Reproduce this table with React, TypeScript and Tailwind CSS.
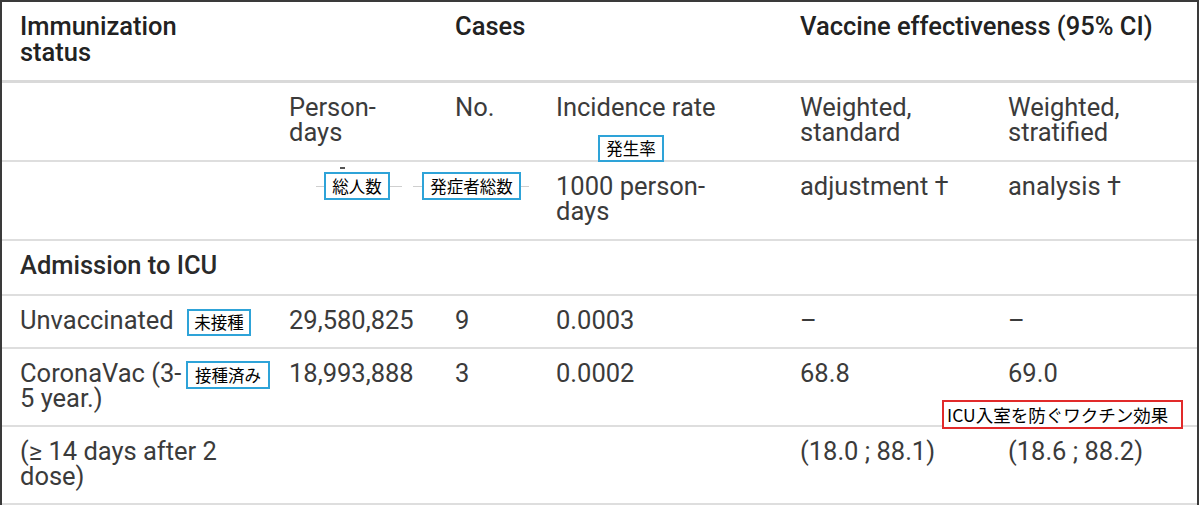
import React from 'react';

const grid = 'grid grid-cols-[269px_166px_101px_244px_208px_1fr]';
const cell = 'pl-[18px]';

type Row = { cells: React.ReactNode[] };

const rows: Row[] = [
  {
    cells: [
      <>Person-<br />days</>,
      'No.',
      'Incidence rate',
      <>Weighted,<br />standard</>,
      <>Weighted,<br />stratified</>,
    ],
  },
  {
    cells: ['', '', <>1000 person-<br />days</>, 'adjustment †', 'analysis †'],
  },
];

const dataRows = [
  { label: 'Unvaccinated', vals: ['29,580,825', '9', '0.0003', '–', '–'] },
  { label: <>CoronaVac (3-<br />5 year.)</>, vals: ['18,993,888', '3', '0.0002', '68.8', '69.0'] },
  { label: <>(≥ 14 days after 2<br />dose)</>, vals: ['', '', '', '(18.0 ; 88.1)', '(18.6 ; 88.2)'] },
];

const Note = ({ text, className, red }: { text: string; className: string; red?: boolean }) => (
  <div
    className={`absolute flex items-center bg-white text-black font-['Noto_Sans_CJK_JP',sans-serif] border-2 ${
      red ? 'border-[#e12a2a] px-[3px] text-[17.5px]' : 'border-[#2ea3d8] justify-center text-[16.5px]'
    } ${className}`}
  >
    {text}
  </div>
);

export default function App() {
  return (
    <div className="w-[1200px] h-[506px] overflow-hidden bg-white font-['Roboto','Liberation_Sans',sans-serif] text-[25.5px] leading-[25px] text-[#3b3b3b]">
      <div className="relative w-[1199px] border-t-2 border-x-2 border-[#3a3a3a]">
        {/* header */}
        <div className={`${grid} border-b-[3px] border-[#d9d9d9] pt-[11px] pb-[15px] font-medium text-[#222] leading-[26px]`}>
          <div className={`${cell} col-span-2`}>Immunization<br />status</div>
          <div className={`${cell} col-span-2`}>Cases</div>
          <div className={`${cell} col-span-2`}>Vaccine effectiveness (95% CI)</div>
        </div>

        {rows.map((r, i) => (
          <div key={i} className={`${grid} border-b-2 border-[#dedede] pt-3 h-[79px]`}>
            <div className={cell}></div>
            {r.cells.map((c, j) => (
              <div key={j} className={cell}>{c}</div>
            ))}
          </div>
        ))}

        <div className={`${grid} border-b-2 border-[#dedede] pt-3 pb-4 font-medium text-[#2a2a2a]`}>
          <div className={`${cell} col-span-6`}>Admission to ICU</div>
        </div>

        {dataRows.map((r, i) => (
          <div key={i} className={`${grid} border-b-2 border-[#dedede] pt-3 pb-[14px]`}>
            <div className={cell}>{r.label}</div>
            {r.vals.map((v, j) => (
              <div key={j} className={cell}>{v}</div>
            ))}
          </div>
        ))}

        {/* annotations laid over the table */}
        <div className="absolute left-[314px] top-[184px] w-[86px] h-px bg-[#cfcfcf]" />
        <div className="absolute left-[411px] top-[184px] w-[116px] h-px bg-[#cfcfcf]" />
        <div className="absolute left-[338px] top-[165px] w-[5px] h-[2px] bg-[#555]" />
        <Note text="発生率" className="left-[596px] top-[133px] w-[66px] h-[27px]" />
        <Note text="総人数" className="left-[322px] top-[170px] w-[66px] h-[28px]" />
        <Note text="発症者総数" className="left-[420px] top-[170px] w-[99px] h-[28px]" />
        <Note text="未接種" className="left-[185px] top-[307px] w-[64px] h-[27px]" />
        <Note text="接種済み" className="left-[184px] top-[359px] w-[84px] h-[28px]" />
        <Note text="ICU入室を防ぐワクチン効果" red className="left-[940px] top-[398px] w-[241px] h-[29px]" />
      </div>
    </div>
  );
}
